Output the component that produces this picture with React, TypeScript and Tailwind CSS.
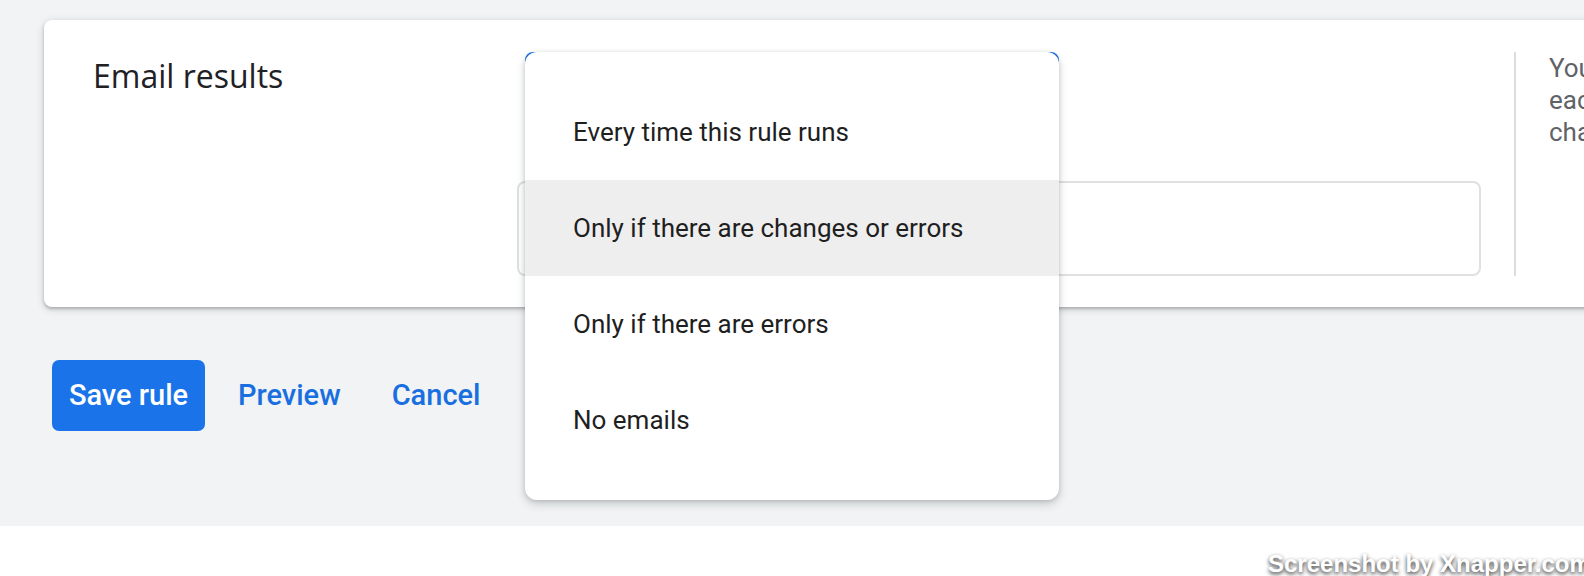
const OPTIONS = [
  "Every time this rule runs",
  "Only if there are changes or errors",
  "Only if there are errors",
  "No emails",
];

const HIGHLIGHTED = 1;

export default function App() {
  return (
    <div className="relative w-[1584px] h-[576px] overflow-hidden bg-white">
      <div className="h-[526px] bg-[#f1f3f4] pt-[20px]">
        {/* Card */}
        <div className="ml-[44px] w-[1600px] bg-white rounded-[8px] shadow-[0_2px_3px_rgba(60,64,67,0.3),0_2px_6px_2px_rgba(60,64,67,0.12)] flex pl-[49px] pt-[32px] pb-[31px]">
          <div className="w-[424px] shrink-0">
            <h2 className="mt-[4px] text-[32px] leading-[40px] text-[#202124] font-['Open_Sans',sans-serif]">
              Email results
            </h2>
          </div>

          {/* Field column */}
          <div className="relative w-[964px] shrink-0 flex flex-col">
            <div className="ml-[8px] w-[534px] h-[112px] rounded-[8px] border-2 border-[#1a73e8]" />
            <div className="mt-[17px] h-[95px] rounded-[8px] border-2 border-[#e0e0e0]" />

            {/* Dropdown menu */}
            <ul className="absolute left-[8px] top-0 z-10 w-[534px] rounded-[12px] bg-white py-[32px] shadow-[0_4px_10px_rgba(60,64,67,0.22),0_1px_4px_rgba(60,64,67,0.18)] font-['Roboto',sans-serif]">
              {OPTIONS.map((o, i) => (
                <li
                  key={o}
                  className={`h-[96px] flex items-center pl-[48px] text-[26px] text-[#1f1f1f] ${i === HIGHLIGHTED ? "bg-[#eeeeee]" : ""}`}
                >
                  {o}
                </li>
              ))}
            </ul>
          </div>

          <div className="ml-[33px] w-[2px] shrink-0 bg-[#dadce0]" />

          <div className="ml-[33px] w-[400px] shrink-0 text-[26px] leading-[32px] text-[#5f6368] font-['Roboto',sans-serif] whitespace-nowrap">
            <div>You'll get an email summary</div>
            <div>each time this rule makes</div>
            <div>changes to your campaigns.</div>
          </div>
        </div>

        {/* Actions */}
        <div className="mt-[53px] ml-[52px] flex items-center font-['Roboto',sans-serif] text-[29px] font-medium">
          <button className="h-[71px] w-[153px] rounded-[7px] bg-[#1a73e8] text-white">
            Save rule
          </button>
          <button className="ml-[17px] h-[71px] px-[16px] text-[#1a6fe0]">Preview</button>
          <button className="ml-[19px] h-[71px] px-[16px] text-[#1a6fe0]">Cancel</button>
        </div>
      </div>

      <div className="absolute left-[1268px] top-[552px] whitespace-nowrap text-[24px] leading-[24px] font-bold text-white font-['Liberation_Sans',sans-serif] [text-shadow:0_2px_4px_rgba(0,0,0,0.85)]">
        Screenshot by Xnapper.com
      </div>
    </div>
  );
}
